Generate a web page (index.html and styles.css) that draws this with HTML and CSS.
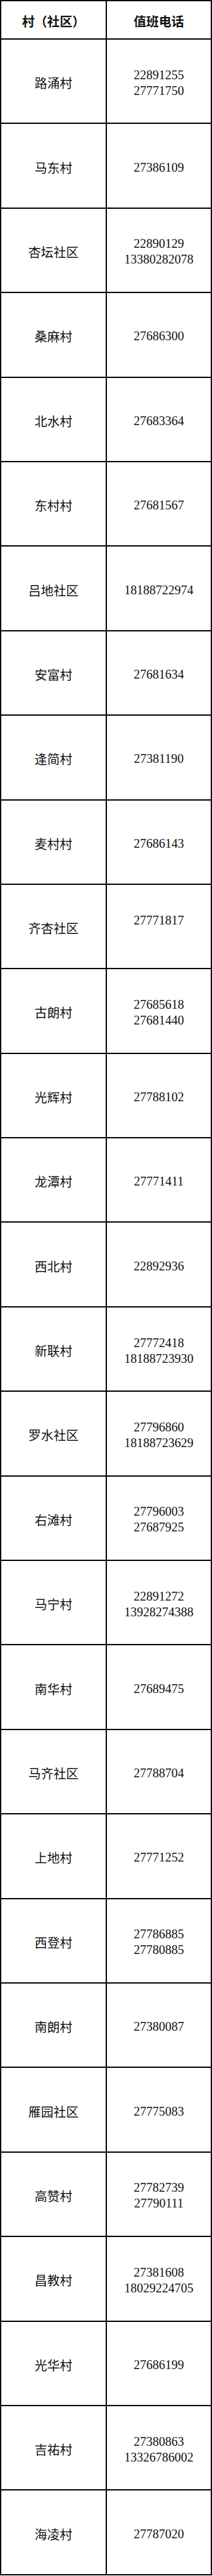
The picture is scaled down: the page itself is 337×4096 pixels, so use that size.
FILE: index.html
```html
<!DOCTYPE html>
<html lang="zh-CN">
<head>
<meta charset="utf-8">
<title>值班电话</title>
<link rel="stylesheet" href="styles.css">
</head>
<body>
<div class="table">
  <div class="cell head">村（社区）</div>
  <div class="cell head">值班电话</div>

  <div class="cell name">路涌村</div>
  <div class="cell phone"><span>22891255</span><span>27771750</span></div>

  <div class="cell name">马东村</div>
  <div class="cell phone"><span>27386109</span></div>

  <div class="cell name">杏坛社区</div>
  <div class="cell phone"><span>22890129</span><span>13380282078</span></div>

  <div class="cell name">桑麻村</div>
  <div class="cell phone"><span>27686300</span></div>

  <div class="cell name">北水村</div>
  <div class="cell phone"><span>27683364</span></div>

  <div class="cell name">东村村</div>
  <div class="cell phone"><span>27681567</span></div>

  <div class="cell name">吕地社区</div>
  <div class="cell phone"><span>18188722974</span></div>

  <div class="cell name">安富村</div>
  <div class="cell phone"><span>27681634</span></div>

  <div class="cell name">逢简村</div>
  <div class="cell phone"><span>27381190</span></div>

  <div class="cell name">麦村村</div>
  <div class="cell phone"><span>27686143</span></div>

  <div class="cell name">齐杏社区</div>
  <div class="cell phone"><span>27771817</span><span>&nbsp;</span></div>

  <div class="cell name">古朗村</div>
  <div class="cell phone"><span>27685618</span><span>27681440</span></div>

  <div class="cell name">光辉村</div>
  <div class="cell phone"><span>27788102</span></div>

  <div class="cell name">龙潭村</div>
  <div class="cell phone"><span>27771411</span></div>

  <div class="cell name">西北村</div>
  <div class="cell phone"><span>22892936</span></div>

  <div class="cell name">新联村</div>
  <div class="cell phone"><span>27772418</span><span>18188723930</span></div>

  <div class="cell name">罗水社区</div>
  <div class="cell phone"><span>27796860</span><span>18188723629</span></div>

  <div class="cell name">右滩村</div>
  <div class="cell phone"><span>27796003</span><span>27687925</span></div>

  <div class="cell name">马宁村</div>
  <div class="cell phone"><span>22891272</span><span>13928274388</span></div>

  <div class="cell name">南华村</div>
  <div class="cell phone"><span>27689475</span></div>

  <div class="cell name">马齐社区</div>
  <div class="cell phone"><span>27788704</span></div>

  <div class="cell name">上地村</div>
  <div class="cell phone"><span>27771252</span></div>

  <div class="cell name">西登村</div>
  <div class="cell phone"><span>27786885</span><span>27780885</span></div>

  <div class="cell name">南朗村</div>
  <div class="cell phone"><span>27380087</span></div>

  <div class="cell name">雁园社区</div>
  <div class="cell phone"><span>27775083</span></div>

  <div class="cell name">高赞村</div>
  <div class="cell phone"><span>27782739</span><span>27790111</span></div>

  <div class="cell name">昌教村</div>
  <div class="cell phone"><span>27381608</span><span>18029224705</span></div>

  <div class="cell name">光华村</div>
  <div class="cell phone"><span>27686199</span></div>

  <div class="cell name">吉祐村</div>
  <div class="cell phone"><span>27380863</span><span>13326786002</span></div>

  <div class="cell name">海凌村</div>
  <div class="cell phone"><span>27787020</span></div>
</div>
</body>
</html>
```
FILE: styles.css
```css
html, body {
  margin: 0;
  padding: 0;
  background: #ffffff;
}

.table {
  width: 337px;
  box-sizing: border-box;
  display: grid;
  grid-template-columns: 168px 1fr;
  grid-template-rows: 61px;
  grid-auto-rows: 134.4px;
  border-top: 2px solid #000;
  border-left: 2px solid #000;
  color: #111;
}

.cell {
  box-sizing: border-box;
  border-right: 2px solid #000;
  border-bottom: 2px solid #000;
  display: flex;
  flex-direction: column;
  align-items: center;
  justify-content: center;
  padding-top: 5px;
  line-height: 25px;
  text-align: center;
}

.head {
  padding-top: 3px;
  font-family: "Noto Sans CJK SC", sans-serif;
  font-weight: 700;
  font-size: 20px;
}

.name {
  font-family: "Noto Sans CJK SC", sans-serif;
  font-size: 20px;
  font-weight: 400;
}

.phone {
  font-family: "Liberation Serif", "Noto Sans CJK SC", serif;
  font-size: 20px;
}

.phone span {
  display: block;
}
```
